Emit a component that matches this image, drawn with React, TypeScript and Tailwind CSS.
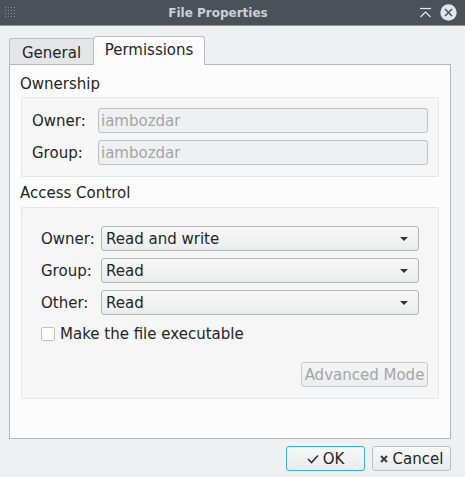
import React from 'react';

const font = { fontFamily: '"DejaVu Sans", "Noto Sans", sans-serif' };

function Grip() {
  const dots = [];
  for (let r = 0; r < 4; r++)
    for (let c = 0; c < 4; c++)
      dots.push(<rect key={`${r}-${c}`} x={c * 3} y={r * 3} width={1} height={1} fill="#8a9096" />);
  return (
    <svg width="12" height="12" viewBox="0 0 12 12">
      {dots}
    </svg>
  );
}

function Arrow() {
  return (
    <svg width="8" height="4" viewBox="0 0 8 4" className="shrink-0">
      <path d="M0 0 H8 L4 4 Z" fill="#31363b" />
    </svg>
  );
}

function Select({ value }: { value: string }) {
  return (
    <div className="flex h-[25px] flex-1 items-center justify-between rounded-[3px] border border-[#b3b5b7] bg-gradient-to-b from-[#f7f7f8] to-[#ebecec] pl-[4px] pr-[10px]">
      <span>{value}</span>
      <Arrow />
    </div>
  );
}

function Field({ value }: { value: string }) {
  return (
    <div className="flex h-[25px] flex-1 items-center rounded-[3px] border border-[#bdbfc1] bg-[#eff0f1] pl-[2px] text-[#a3a5a7]">
      {value}
    </div>
  );
}

export default function App() {
  return (
    <div className="flex h-[477px] w-[465px] flex-col bg-[#eff0f1] text-[15px] leading-[18px] text-[#232627]" style={font}>
      {/* title bar */}
      <div className="flex h-[26px] shrink-0 items-center border-b border-[#3daee9] bg-[#4a5158] pl-[5px] pr-[8px]">
        <Grip />
        <div className="flex-1 text-center text-[12px] font-bold text-[#cdd0d3]">File Properties</div>
        <div className="flex items-center gap-[8px]">
          <svg width="13" height="12" viewBox="0 0 13 12">
            <path d="M1 1.5 H12" stroke="#e6e8ea" strokeWidth="1.2" />
            <path d="M1.5 10 L6.5 5 L11.5 10" stroke="#e6e8ea" strokeWidth="1.2" fill="none" />
          </svg>
          <svg width="17" height="17" viewBox="0 0 17 17">
            <circle cx="8.5" cy="8.5" r="8.2" fill="#e3e5e7" />
            <path d="M5 5 L12 12 M12 5 L5 12" stroke="#4a5158" strokeWidth="1.5" />
          </svg>
        </div>
      </div>

      {/* tabs + pane */}
      <div className="ml-[9px] mr-[14px] mt-[10px] flex flex-col">
        <div className="flex items-end">
          <div className="-mb-px flex h-[27px] w-[84px] items-center justify-center rounded-tl-[3px] border border-r-0 border-[#bcbec0] bg-[#e3e5e6] pt-[2px]">
            General
          </div>
          <div className="z-10 -mb-px flex h-[29px] w-[112px] items-center justify-center rounded-t-[3px] border border-b-0 border-[#bcbec0] bg-[#fcfcfc] pb-[2px]">
            Permissions
          </div>
        </div>
        <div className="flex h-[375px] flex-col border border-[#b3b5b7] bg-[#fcfcfc] px-[11px] pt-[11px]">
          <div className="ml-[-1px] leading-[17px]">Ownership</div>
          <div className="mt-[4px] flex flex-col gap-[7px] rounded-[2px] border border-[#e4e5e6] bg-[#f6f6f6] pb-[11px] pl-[10px] pr-[10px] pt-[10px]">
            <div className="flex items-center">
              <span className="w-[66px]">Owner:</span>
              <Field value="iambozdar" />
            </div>
            <div className="flex items-center">
              <span className="w-[66px]">Group:</span>
              <Field value="iambozdar" />
            </div>
          </div>

          <div className="ml-[-1px] mt-[8px] leading-[17px]">Access Control</div>
          <div className="mt-[5px] flex flex-col rounded-[2px] border border-[#e4e5e6] bg-[#f6f6f6] pb-[11px] pr-[10px] pt-[18px]">
            <div className="flex flex-col gap-[7px] pl-[19px] pr-[9px]">
              <div className="flex items-center">
                <span className="w-[60px]">Owner:</span>
                <Select value="Read and write" />
              </div>
              <div className="flex items-center">
                <span className="w-[60px]">Group:</span>
                <Select value="Read" />
              </div>
              <div className="flex items-center">
                <span className="w-[60px]">Other:</span>
                <Select value="Read" />
              </div>
              <div className="mt-[3px] flex items-center gap-[5px]">
                <span className="h-[14px] w-[14px] rounded-[2px] border border-[#c2c4c6] bg-[#fcfcfc]" />
                <span>Make the file executable</span>
              </div>
            </div>
            <div className="mt-[19px] flex justify-end">
              <div className="flex h-[25px] w-[127px] items-center justify-center rounded-[3px] border border-[#c6c8ca] bg-gradient-to-b from-[#f5f5f6] to-[#ecedee] text-[#a3a5a7]">
                Advanced Mode
              </div>
            </div>
          </div>
        </div>
      </div>

      {/* buttons */}
      <div className="mr-[14px] mt-[7px] flex justify-end gap-[7px]">
        <div className="flex h-[25px] w-[79px] items-center justify-center gap-[4px] rounded-[3px] border border-[#3daee9] bg-gradient-to-b from-[#f6f7f7] to-[#eaebec]">
          <svg width="12" height="10" viewBox="0 0 12 10">
            <path d="M1 5 L4.5 8.5 L11 1.5" stroke="#31363b" strokeWidth="1.6" fill="none" />
          </svg>
          <span>OK</span>
        </div>
        <div className="flex h-[25px] w-[79px] items-center justify-center gap-[5px] rounded-[3px] border border-[#bcbec0] bg-gradient-to-b from-[#f6f7f7] to-[#eaebec]">
          <svg width="8" height="8" viewBox="0 0 8 8">
            <path d="M1 1 L7 7 M7 1 L1 7" stroke="#31363b" strokeWidth="1.8" />
          </svg>
          <span>Cancel</span>
        </div>
      </div>
    </div>
  );
}
